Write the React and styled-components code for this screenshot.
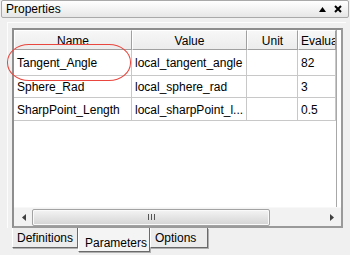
import React from 'react';
import styled, { createGlobalStyle } from 'styled-components';

const GlobalStyle = createGlobalStyle`
    html, body {
        margin: 0;
        background: #f0f0f0;
    }
    body {
        font-family: "Liberation Sans", Arial, sans-serif;
        font-size: 12px;
        color: #000;
    }
`

const columns = [
    { key: 'name', title: 'Name', width: 118, align: 'center' },
    { key: 'value', title: 'Value', width: 115, align: 'center' },
    { key: 'unit', title: 'Unit', width: 51, align: 'center' },
    { key: 'evaluation', title: 'Evaluation', width: 38, align: 'left' },
];

const rows = [
    { name: 'Tangent_Angle', value: 'local_tangent_angle', unit: '', evaluation: '82', height: 26 },
    { name: 'Sphere_Rad', value: 'local_sphere_rad', unit: '', evaluation: '3', height: 22 },
    { name: 'SharpPoint_Length', value: 'local_sharpPoint_l...', unit: '', evaluation: '0.5', height: 23 },
];

const tabs = [
    { label: 'Definitions', width: 66 },
    { label: 'Parameters', width: 72, active: true },
    { label: 'Options', width: 58 },
];

const App = () => {
    return (
        <Window>
            <GlobalStyle />
            <TitleBar>
                <span>Properties</span>
                <TitleButtons>
                    <svg width="7" height="5" viewBox="0 0 7 5">
                        <path d="M0 5 L3.5 0 L7 5 Z" fill="#000" />
                    </svg>
                    <svg width="8" height="8" viewBox="0 0 8 8">
                        <path d="M1 1 L7 7 M7 1 L1 7" stroke="#000" strokeWidth="2" />
                    </svg>
                </TitleButtons>
            </TitleBar>

            <Body>
                <GroupBox>
                    <GridFrame>
                        <GridArea>
                            <GridRow>
                                {columns.map(col => (
                                    <HeaderCell key={col.key} width={col.width} align={col.align}>
                                        {col.title}
                                    </HeaderCell>
                                ))}
                            </GridRow>
                            {rows.map(row => (
                                <GridRow key={row.name}>
                                    {columns.map(col => (
                                        <Cell key={col.key} width={col.width} height={row.height}>
                                            {row[col.key]}
                                        </Cell>
                                    ))}
                                </GridRow>
                            ))}
                        </GridArea>
                        <ScrollBar>
                            <ArrowButton>
                                <svg width="4" height="7" viewBox="0 0 4 7">
                                    <path d="M4 0 L0 3.5 L4 7 Z" fill="#404040" />
                                </svg>
                            </ArrowButton>
                            <Track>
                                <Thumb>
                                    <Grip />
                                </Thumb>
                            </Track>
                            <ArrowButton>
                                <svg width="4" height="7" viewBox="0 0 4 7">
                                    <path d="M0 0 L4 3.5 L0 7 Z" fill="#404040" />
                                </svg>
                            </ArrowButton>
                        </ScrollBar>
                    </GridFrame>
                </GroupBox>
            </Body>

            <TabStrip>
                {tabs.map(tab => (
                    <Tab key={tab.label} width={tab.width} active={tab.active}>
                        {tab.label}
                    </Tab>
                ))}
            </TabStrip>

            <Highlight />
        </Window>
    )
}

const Window = styled.div`
    position: relative;
    width: 350px;
    height: 255px;
    overflow: hidden;
    background: #f0f0f0;
`

const TitleBar = styled.div`
    height: 16px;
    margin: 0 1px 0 1px;
    padding: 0 6px 0 4px;
    border: 1px solid #a9a9a9;
    border-radius: 2px;
    background: linear-gradient(#ffffff, #f3f3f3 50%, #e6e6e6);
    display: flex;
    align-items: center;
    justify-content: space-between;
    font-size: 12px;
`

const TitleButtons = styled.div`
    display: flex;
    align-items: center;
    gap: 8px;
`

const Body = styled.div`
    padding: 4px 4px 0 7px;
`

const GroupBox = styled.div`
    border-left: 1px solid #fdfdfd;
    border-top: 1px solid #fdfdfd;
    padding: 5px 1px 0 4px;
`

const GridFrame = styled.div`
    width: 327px;
    border: 2px solid #8e8e8e;
    border-right-color: #9a9a9a;
    border-bottom-color: #9a9a9a;
    background: #fff;
    display: flex;
    flex-direction: column;
`

const GridArea = styled.div`
    height: 177px;
    border-right: 1px solid #a8a8a8;
    margin-right: 4px;
`

const GridRow = styled.div`
    display: flex;
`

const HeaderCell = styled.div`
    width: ${p => p.width}px;
    height: 20px;
    flex: none;
    box-sizing: border-box;
    border-right: 1px solid #a0a0a0;
    border-bottom: 1px solid #a0a0a0;
    border-left: 1px solid #ffffff;
    border-top: 1px solid #ffffff;
    background: linear-gradient(#f7f7f7, #ececec);
    display: flex;
    align-items: center;
    justify-content: ${p => (p.align === 'left' ? 'flex-start' : 'center')};
    padding: 1px 2px 0;
    white-space: nowrap;
    overflow: hidden;
`

const Cell = styled.div`
    width: ${p => p.width}px;
    height: ${p => p.height}px;
    flex: none;
    box-sizing: border-box;
    border-right: 1px solid #c8c8c8;
    border-bottom: 1px solid #c8c8c8;
    display: flex;
    align-items: center;
    padding: 1px 3px 0;
    white-space: nowrap;
    overflow: hidden;
`

const ScrollBar = styled.div`
    height: 18px;
    display: flex;
    align-items: center;
    background: #f2f2f2;
    border-top: 1px solid #f8f8f8;
    padding: 0 1px;
`

const ArrowButton = styled.div`
    width: 17px;
    height: 17px;
    display: flex;
    align-items: center;
    justify-content: center;
    flex: none;
`

const Track = styled.div`
    flex: 1;
    height: 17px;
    display: flex;
    align-items: center;
    padding-right: 53px;
`

const Thumb = styled.div`
    flex: 1;
    height: 15px;
    border: 1px solid #a3a3a3;
    border-radius: 2px;
    background: linear-gradient(#f4f4f4, #e4e4e4 50%, #d4d4d4);
    box-shadow: inset 0 0 0 1px #fafafa;
    display: flex;
    align-items: center;
    justify-content: center;
`

const Grip = styled.div`
    width: 7px;
    height: 6px;
    background: repeating-linear-gradient(90deg, #555 0 1px, transparent 1px 3px);
`

const TabStrip = styled.div`
    display: flex;
    align-items: flex-start;
    padding-left: 12px;
`

const Tab = styled.div`
    width: ${p => p.width}px;
    height: ${p => (p.active ? '24px' : '20px')};
    box-sizing: border-box;
    padding: ${p => (p.active ? '8px 0 0 6px' : '3px 0 0 4px')};
    border-left: 1px solid #ffffff;
    border-right: 1px solid #6a6a6a;
    border-bottom: 1px solid #6a6a6a;
    box-shadow: 1px 1px 0 #b0b0b0;
    background: ${p => (p.active ? '#f4f4f4' : '#ececec')};
    font-size: 12px;
    white-space: nowrap;
`

const Highlight = styled.div`
    position: absolute;
    left: 7px;
    top: 44px;
    width: 122px;
    height: 35px;
    border: 1px solid #e8463e;
    border-radius: 22px / 18px;
    pointer-events: none;
`

export default App;
